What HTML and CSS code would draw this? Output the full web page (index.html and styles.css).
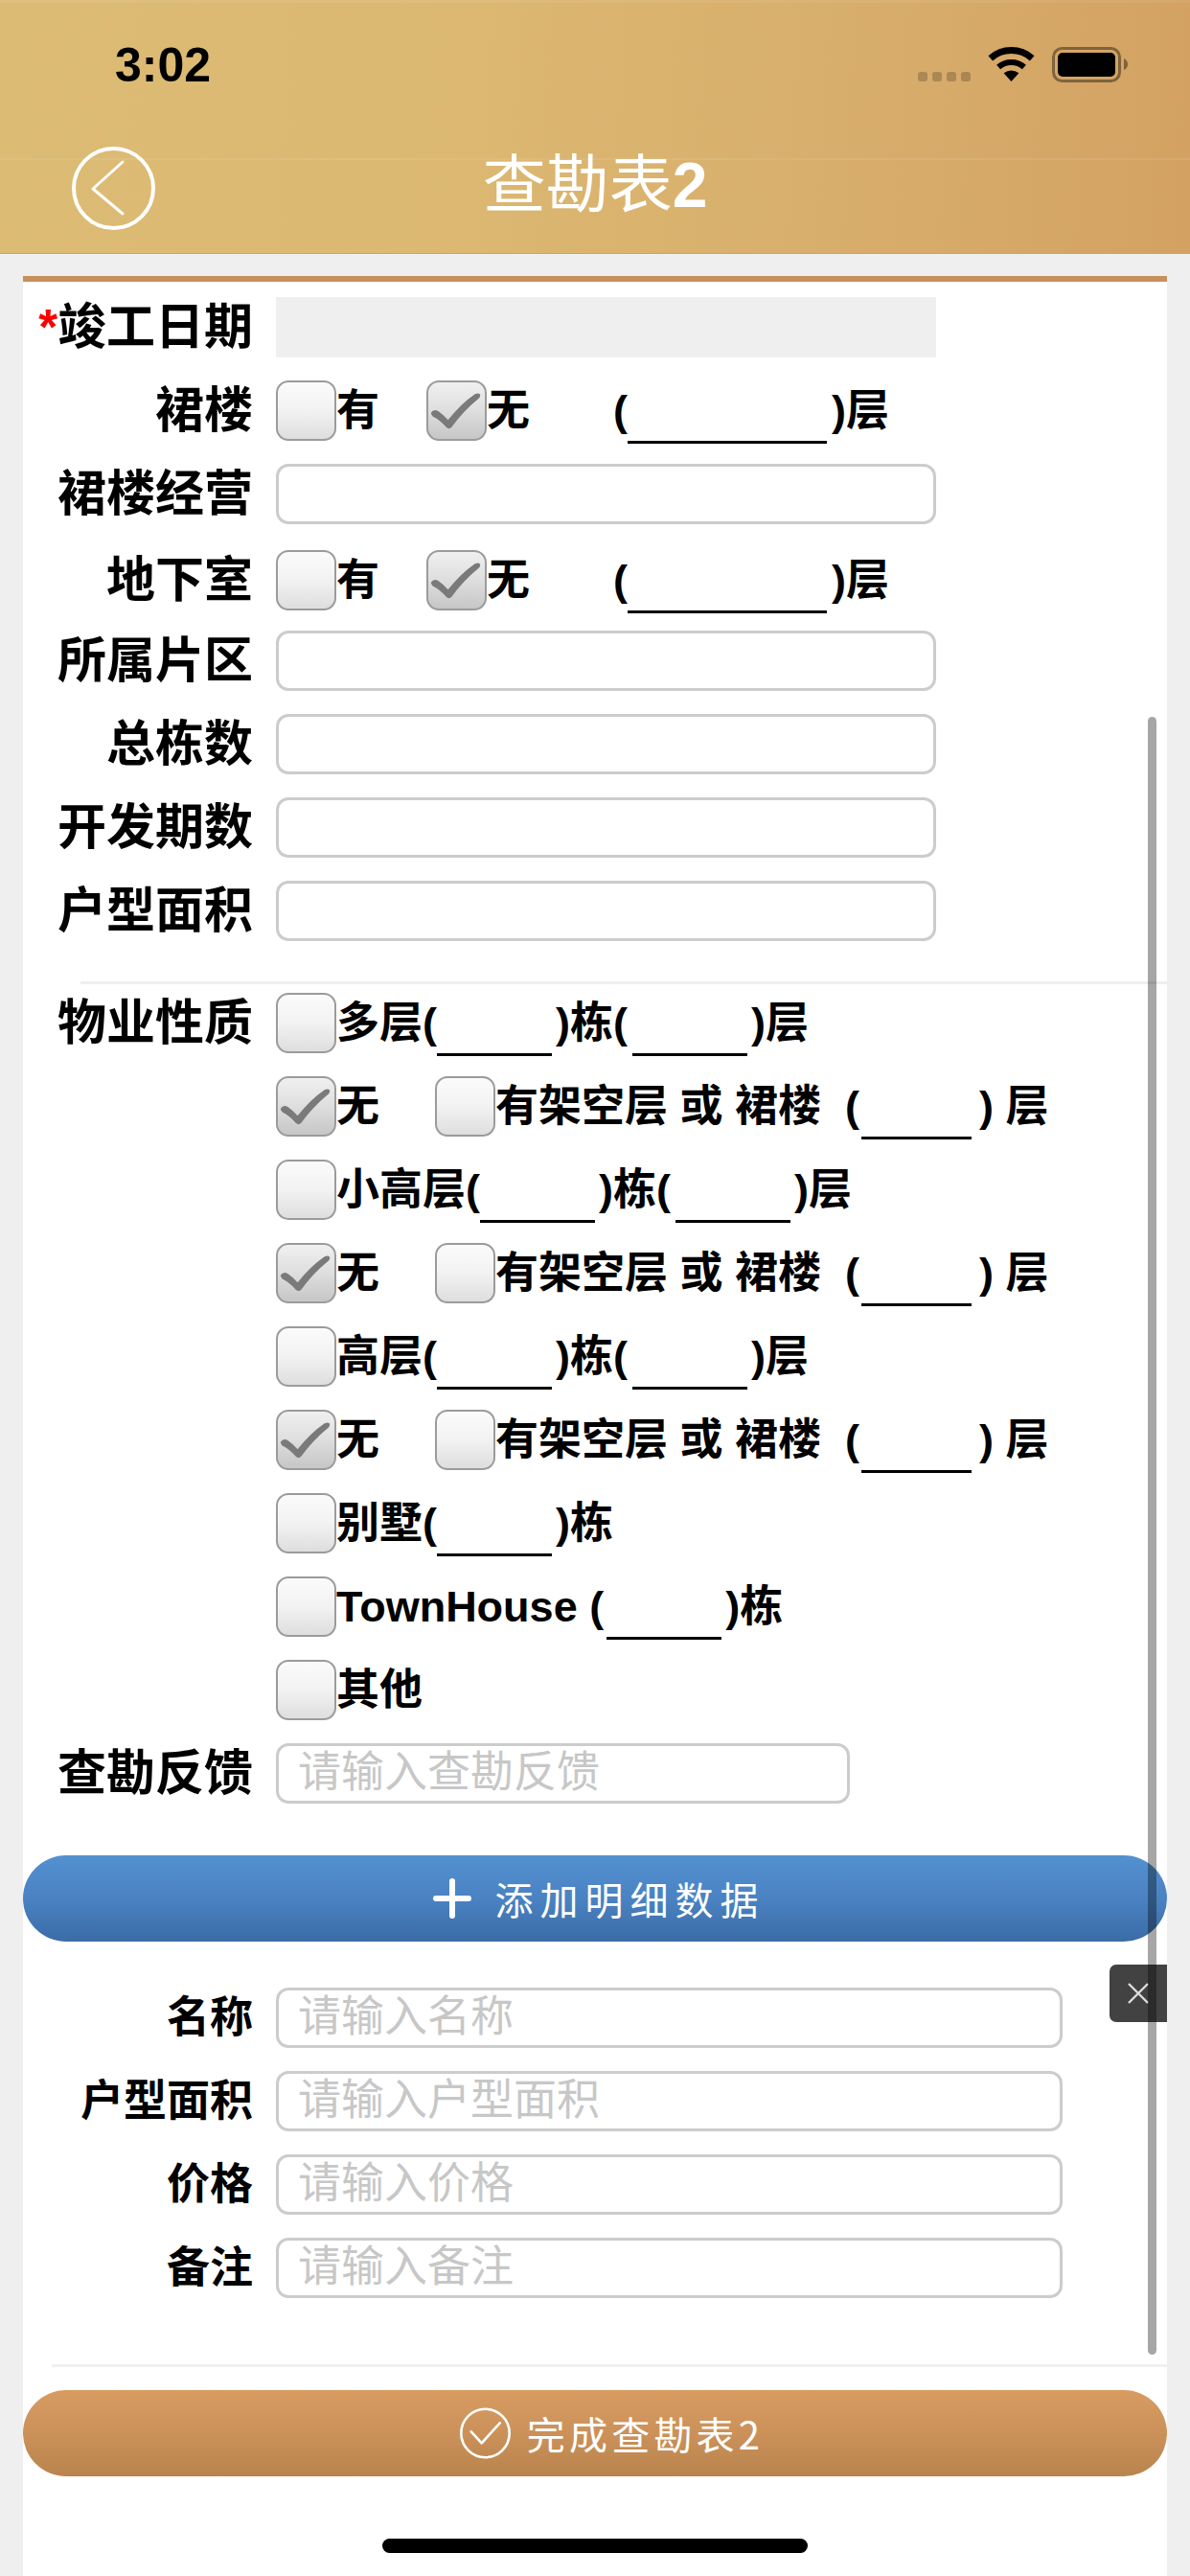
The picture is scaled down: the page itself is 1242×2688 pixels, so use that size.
FILE: index.html
```html
<!DOCTYPE html>
<html lang="zh-CN">
<head>
<meta charset="utf-8">
<title>查勘表2</title>
<link rel="stylesheet" href="styles.css">
</head>
<body>
<svg class="defs" width="0" height="0" aria-hidden="true">
  <symbol id="tick" viewBox="0 0 63 63">
    <path d="M3 34 Q6 29 11 32 Q17 36 22 42 Q36 24 52 13 Q57 11 58 14 Q58 17 55 19 Q39 32 26 50 Q23 53 20 50 Q13 42 5 38 Q3 36 3 34 Z"/>
  </symbol>
</svg>
<header class="header">
  <div class="status">
    <span class="time">3:02</span>
    <svg class="status-icons" width="222" height="40" viewBox="0 0 222 40">
      <g opacity=".2"><rect x="1" y="27" width="10" height="10" rx="3"/><rect x="16" y="27" width="10" height="10" rx="3"/><rect x="31" y="27" width="10" height="10" rx="3"/><rect x="46" y="27" width="10" height="10" rx="3"/></g>
      <path d="M76.8 12.85 A32.5 32.5 0 0 1 120.2 12.85" fill="none" stroke="#000" stroke-width="7"/>
      <path d="M85.1 22.1 A20 20 0 0 1 111.9 22.1" fill="none" stroke="#000" stroke-width="6"/>
      <path d="M98.5 37 L90.6 28.2 Q98.5 23 106.4 28.2 Z"/>
      <rect x="142.5" y="2.5" width="69" height="34" rx="9" fill="none" stroke="#000" stroke-width="3" opacity=".4"/>
      <rect x="147" y="7" width="60" height="25" rx="5"/>
      <path d="M216 13 Q220 15 220 19 Q220 23 216 25 Z" opacity=".4"/>
    </svg>
  </div>
  <nav class="nav">
    <svg class="back" width="90" height="90" viewBox="0 0 90 90" fill="none" stroke="#fff" stroke-linecap="round" stroke-linejoin="round">
      <circle cx="44.5" cy="44.5" r="41.5" stroke-width="4"/>
      <path d="M54 17 L23 45 L54 71" stroke-width="3"/>
    </svg>
    <h1 class="title">查勘表<span class="title-num">2</span></h1>
  </nav>
</header>

<main class="main">
  <div class="row">
    <div class="label"><span class="req">*</span>竣工日期</div>
    <div class="field field-disabled"></div>
  </div>
  <div class="row">
    <div class="label">裙楼</div>
    <span class="cb"></span><span class="opt opt-a">有</span>
    <span class="cb cb-on"><svg class="tick"><use href="#tick"/></svg></span><span class="opt opt-b">无</span>
    <span class="opt">(</span><span class="blank blank-lg"></span><span class="opt">)层</span>
  </div>
  <div class="row">
    <div class="label">裙楼经营</div>
    <input class="field" type="text">
  </div>
  <div class="row row-shift">
    <div class="label">地下室</div>
    <span class="cb"></span><span class="opt opt-a">有</span>
    <span class="cb cb-on"><svg class="tick"><use href="#tick"/></svg></span><span class="opt opt-b">无</span>
    <span class="opt">(</span><span class="blank blank-lg"></span><span class="opt">)层</span>
  </div>
  <div class="row">
    <div class="label">所属片区</div>
    <input class="field" type="text">
  </div>
  <div class="row">
    <div class="label">总栋数</div>
    <input class="field" type="text">
  </div>
  <div class="row">
    <div class="label">开发期数</div>
    <input class="field" type="text">
  </div>
  <div class="row">
    <div class="label">户型面积</div>
    <input class="field" type="text">
  </div>

  <hr class="rule rule-top">

  <div class="row row-stack">
    <div class="label">物业性质</div>
    <div class="stack">
      <div class="line"><span class="cb"></span><span class="opt">多层(</span><span class="blank"></span><span class="opt opt-mid">)栋(</span><span class="blank"></span><span class="opt">)层</span></div>
      <div class="line"><span class="cb cb-on"><svg class="tick"><use href="#tick"/></svg></span><span class="opt opt-c">无</span><span class="cb"></span><span class="opt opt-d">有架空层 或 裙楼</span><span class="opt">(</span><span class="blank blank-sm"></span><span class="opt">) 层</span></div>
      <div class="line"><span class="cb"></span><span class="opt">小高层(</span><span class="blank"></span><span class="opt opt-mid">)栋(</span><span class="blank"></span><span class="opt">)层</span></div>
      <div class="line"><span class="cb cb-on"><svg class="tick"><use href="#tick"/></svg></span><span class="opt opt-c">无</span><span class="cb"></span><span class="opt opt-d">有架空层 或 裙楼</span><span class="opt">(</span><span class="blank blank-sm"></span><span class="opt">) 层</span></div>
      <div class="line"><span class="cb"></span><span class="opt">高层(</span><span class="blank"></span><span class="opt opt-mid">)栋(</span><span class="blank"></span><span class="opt">)层</span></div>
      <div class="line"><span class="cb cb-on"><svg class="tick"><use href="#tick"/></svg></span><span class="opt opt-c">无</span><span class="cb"></span><span class="opt opt-d">有架空层 或 裙楼</span><span class="opt">(</span><span class="blank blank-sm"></span><span class="opt">) 层</span></div>
      <div class="line"><span class="cb"></span><span class="opt">别墅(</span><span class="blank"></span><span class="opt">)栋</span></div>
      <div class="line"><span class="cb"></span><span class="opt opt-town">TownHouse (</span><span class="blank"></span><span class="opt">)栋</span></div>
      <div class="line"><span class="cb"></span><span class="opt">其他</span></div>
    </div>
  </div>
  <div class="row">
    <div class="label">查勘反馈</div>
    <input class="field field-md" type="text" placeholder="请输入查勘反馈">
  </div>

  <button class="btn btn-add" type="button">
    <svg class="btn-plus" width="40" height="42" viewBox="0 0 40 42" fill="none" stroke="#fff" stroke-width="6" stroke-linecap="round"><path d="M20 3 V39 M3 21 H37"/></svg>
    <span class="btn-add-text">添加明细数据</span>
  </button>

  <div class="details">
    <div class="row">
      <div class="label label-sm">名称</div>
      <input class="field field-lg" type="text" placeholder="请输入名称">
    </div>
    <div class="row">
      <div class="label label-sm">户型面积</div>
      <input class="field field-lg" type="text" placeholder="请输入户型面积">
    </div>
    <div class="row">
      <div class="label label-sm">价格</div>
      <input class="field field-lg" type="text" placeholder="请输入价格">
    </div>
    <div class="row">
      <div class="label label-sm">备注</div>
      <input class="field field-lg" type="text" placeholder="请输入备注">
    </div>
  </div>

  <hr class="rule rule-bottom">

  <button class="btn btn-done" type="button">
    <svg class="btn-check" width="53" height="54" viewBox="0 0 53 54" fill="none" stroke="#fff" stroke-width="2.6" stroke-linecap="round" stroke-linejoin="round"><circle cx="26.5" cy="27" r="25.2"/><path d="M11.7 25.3 L22.7 37.3 L41.7 16.3"/></svg>
    <span class="btn-done-text">完成查勘表2</span>
  </button>

  <div class="home"></div>

  <div class="close"><svg width="24" height="24" viewBox="0 0 24 24" fill="none" stroke="#ddd" stroke-width="2.4"><path d="M2 2 L22 22 M22 2 L2 22"/></svg></div>
  <div class="scrollbar"></div>
</main>
</body>
</html>
```

FILE: styles.css
```css
* { box-sizing: border-box; }

html, body {
  margin: 0;
  padding: 0;
}

body {
  width: 1242px;
  height: 2688px;
  overflow: hidden;
  background: #efefef;
  font-family: "Liberation Sans", "Noto Sans CJK SC", sans-serif;
  color: #000;
  display: flex;
  flex-direction: column;
}

.defs { position: absolute; }

/* Header */
.header {
  height: 265px;
  flex: none;
  border-bottom: 1px solid #a9a9a9;
  background:
    linear-gradient(180deg, rgba(255,255,255,.06) 0, rgba(255,255,255,.06) 3px, transparent 3px, transparent 165px, rgba(255,255,255,.07) 165px, rgba(255,255,255,.07) 167px, transparent 167px),
    linear-gradient(93deg, #dcbb74 0%, #dcb972 35%, #d8ae6c 70%, #d3a262 100%);
}

.status {
  height: 136px;
  padding: 0 63px 0 120px;
  display: flex;
  justify-content: space-between;
  align-items: flex-start;
}

.time {
  margin-top: 39px;
  font-size: 50px;
  line-height: 58px;
  font-weight: 700;
}

.status-icons { margin-top: 48px; }

.nav {
  height: 128px;
  display: grid;
  grid-template-columns: 1fr auto 1fr;
  align-items: start;
}

.back {
  margin: 16px 0 0 74px;
}

.title {
  margin: 15px 0 0;
  font-size: 66px;
  line-height: 72px;
  font-weight: 400;
  color: #fff;
  font-family: "Noto Sans CJK SC", sans-serif;
}

.title-num {
  font-family: "Liberation Sans", sans-serif;
  font-weight: 700;
}

/* Card */
.main {
  position: relative;
  flex: 1;
  display: flex;
  flex-direction: column;
  margin: 23px 24px 0;
  padding-top: 16px;
  border-top: 6px solid #c8905c;
  background: #fff;
}

.row {
  display: flex;
  flex: none;
  height: 63px;
  margin-bottom: 24px;
  align-items: center;
}

.row-shift { margin-top: 3px; margin-bottom: 21px; }

.row-stack {
  height: auto;
  align-items: flex-start;
}

.label {
  width: 240px;
  margin-right: 24px;
  flex: none;
  text-align: right;
  font-size: 51px;
  line-height: 63px;
  font-weight: 700;
  white-space: nowrap;
}

.label-sm { font-size: 45px; }

.req { color: #f00; }

.field {
  display: block;
  width: 689px;
  height: 63px;
  padding: 0 20px 10px;
  border: 3px solid #ccc;
  border-radius: 13px;
  background: #fff;
  outline: none;
  font-family: "Noto Sans CJK SC", sans-serif;
  font-size: 45px;
}

.field::placeholder { color: #c7c7c7; opacity: 1; }

.field-disabled {
  border: 0;
  border-radius: 0;
  background: #efefef;
}

.field-md { width: 599px; }
.field-lg { width: 821px; }

/* Options */
.stack {
  display: flex;
  flex-direction: column;
  gap: 24px;
}

.line {
  display: flex;
  height: 63px;
  align-items: center;
}

.cb {
  width: 63px;
  height: 63px;
  flex: none;
  border: 2px solid #9b9b9b;
  border-radius: 13px;
  background: linear-gradient(180deg, #fbfbfb 0%, #f2f2f2 50%, #dedede 100%);
}

.cb-on {
  background: linear-gradient(180deg, #f0f0f0 0%, #dedede 50%, #c6c6c6 100%);
}

.tick {
  display: block;
  width: 59px;
  height: 59px;
  fill: #7a7a7a;
}

.opt {
  flex: none;
  font-size: 45px;
  line-height: 63px;
  font-weight: 700;
  white-space: pre;
}

.opt-a { margin-right: 49px; }
.opt-b { margin-right: 87px; }
.opt-c { margin-right: 58px; }
.opt-d { margin-right: 25px; }
.opt-mid { margin-right: 5px; }
.opt-town { margin-right: 3px; }

.blank {
  align-self: flex-start;
  flex: none;
  width: 120px;
  height: 66px;
  margin-right: 4px;
  border-bottom: 3px solid #000;
}

.blank-lg { width: 208px; margin-right: 5px; }
.blank-sm { width: 115px; margin: 0 8px 0 2px; }

/* Rules */
.rule {
  display: block;
  flex: none;
  height: 3px;
  border: 0;
  background: #efefef;
}

.rule-top { margin: 18px 0 9px 60px; }
.rule-bottom { margin: 45px 0 24px 30px; }

/* Buttons */
.btn {
  display: flex;
  flex: none;
  width: 100%;
  height: 90px;
  padding: 0;
  border: 0;
  border-radius: 45px;
  align-items: center;
  justify-content: center;
  color: #fff;
  font-family: "Noto Sans CJK SC", sans-serif;
  font-size: 40px;
  line-height: 50px;
}

.btn-add {
  margin-top: 30px;
  padding-left: 8px;
  gap: 25px;
  background: linear-gradient(180deg, #5391d1 0%, #4a82c2 50%, #3a6ca6 100%);
}

.btn-add-text { letter-spacing: 7px; }

.details { margin-top: 48px; flex: none; }

.btn-done {
  padding-left: 35px;
  gap: 17px;
  background: linear-gradient(180deg, #d89c62 0%, #cb9159 50%, #b9844e 100%);
}

.btn-done-text { letter-spacing: 4.2px; }

.home {
  flex: none;
  width: 444px;
  height: 15px;
  margin: 65px auto 0;
  border-radius: 8px;
  background: #000;
}

/* Overlays */
.close {
  position: absolute;
  top: 1756px;
  right: 0;
  width: 60px;
  height: 60px;
  display: flex;
  align-items: center;
  justify-content: center;
  border-radius: 7px 0 0 7px;
  background: #424242;
}

.scrollbar {
  position: absolute;
  top: 454px;
  right: 11px;
  width: 9px;
  height: 1709px;
  border-radius: 5px;
  background: rgba(0, 0, 0, .35);
}
```
